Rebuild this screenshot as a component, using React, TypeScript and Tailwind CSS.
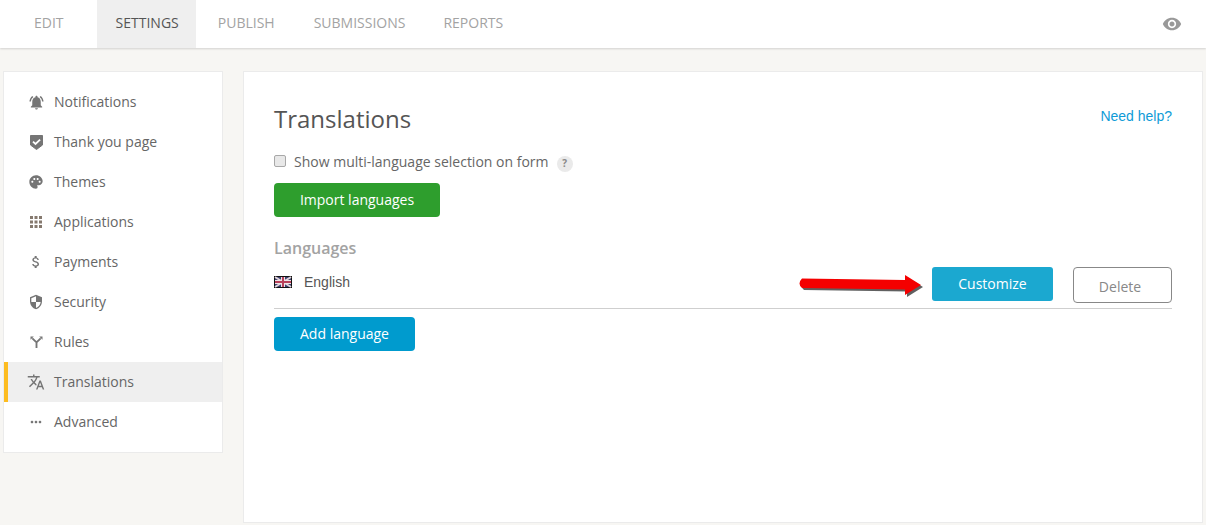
import React from "react";
import {
  MdNotificationsActive,
  MdPalette,
  MdApps,
  MdAttachMoney,
  MdSecurity,
  MdTranslate,
  MdMoreHoriz,
  MdVisibility,
} from "react-icons/md";

const ShieldCheck = () => (
  <svg width="13" height="15" viewBox="0 0 13 15">
    <path d="M0.5 0.5h12v9.5l-6 4.5-6-4.5z" fill="#757575" stroke="#757575" strokeLinejoin="round" />
    <path d="M3 6.6l2.5 2.4 4.6-4.4" fill="none" stroke="#fff" strokeWidth="1.8" />
  </svg>
);

const RulesIcon = () => (
  <svg width="13" height="12" viewBox="0 0 14 13">
    <path d="M7 13V7M7 7L2.5 2.5M7 7l4.5-4.5" fill="none" stroke="#757575" strokeWidth="2" />
    <path d="M0.5 0.5h3.6L0.5 4.1zM13.5 0.5H9.9l3.6 3.6z" fill="#757575" />
  </svg>
);

const Flag = () => (
  <svg width="18" height="12" viewBox="0 0 18 12">
    <rect width="18" height="12" fill="#111" />
    <rect x="1" y="1" width="16" height="10" fill="#3a3f6e" />
    <path d="M1 1l16 10M17 1L1 11" stroke="#e3d5da" strokeWidth="2" />
    <path d="M9 1v10M1 6h16" stroke="#eee4e6" strokeWidth="4" />
    <path d="M9 1v10M1 6h16" stroke="#b8405a" strokeWidth="2" />
  </svg>
);

const RedArrow = () => (
  <svg width="128" height="26" viewBox="0 0 128 26" className="block">
    <path
      d="M4 4.5L107 6L107 1L123 11L107 21L107 15.5L4 14Q-1 9.5 4 4.5z"
      fill="#1c1c1c"
      opacity="0.7"
      transform="translate(2 2)"
    />
    <path d="M4 4.5L107 6L107 1L123 11L107 21L107 15.5L4 14Q-1 9.5 4 4.5z" fill="#f40000" />
  </svg>
);

const tabs = [
  { label: "EDIT", cls: "ml-4 mr-[15px] px-[18px] text-[#a3a3a3]" },
  { label: "SETTINGS", cls: "mr-1 pl-[19px] pr-[17px] bg-[#efefef] text-[#555] border-[#fdbc1f]" },
  { label: "PUBLISH", cls: "mr-[3px] px-[18px] text-[#a3a3a3]" },
  { label: "SUBMISSIONS", cls: "mr-[2px] px-[18px] text-[#a3a3a3]" },
  { label: "REPORTS", cls: "px-[18px] text-[#a3a3a3]" },
];

const menu = [
  { label: "Notifications", icon: <MdNotificationsActive size={17} /> },
  { label: "Thank you page", icon: <ShieldCheck /> },
  { label: "Themes", icon: <MdPalette size={16} /> },
  { label: "Applications", icon: <MdApps size={18} className="text-[#85796e]" /> },
  { label: "Payments", icon: <MdAttachMoney size={16} /> },
  { label: "Security", icon: <MdSecurity size={16} /> },
  { label: "Rules", icon: <RulesIcon /> },
  { label: "Translations", icon: <MdTranslate size={18} />, active: true },
  { label: "Advanced", icon: <MdMoreHoriz size={16} /> },
];

export default function App() {
  return (
    <div className="h-[525px] w-[1206px] overflow-hidden bg-[#f7f6f3] font-['Open_Sans',sans-serif]">
      <div className="flex h-12 items-stretch bg-white pr-[24px] shadow-[0_1px_2px_rgba(0,0,0,0.15)]">
        {tabs.map((tab) => (
          <div
            key={tab.label}
            className={`flex items-center border-b-4 border-transparent pt-[2px] text-sm ${tab.cls}`}
          >
            {tab.label}
          </div>
        ))}
        <div className="ml-auto flex items-center text-[#999]">
          <MdVisibility size={20} />
        </div>
      </div>

      <div className="flex items-start gap-5 pl-[3px] pt-[23px]">
        <div className="h-[382px] w-[220px] border border-[#ebebeb] bg-white py-[10px]">
          {menu.map((item) => (
            <div
              key={item.label}
              className={`flex h-10 items-center border-l-4 text-sm text-[#666] ${
                item.active ? "border-[#fdbc1f] bg-[#efefef]" : "border-transparent"
              }`}
            >
              <span className="flex w-[46px] shrink-0 items-center justify-center pl-[10px] text-[#757575]">
                {item.icon}
              </span>
              <span>{item.label}</span>
            </div>
          ))}
        </div>

        <div className="h-[452px] w-[960px] border border-[#ebebeb] bg-white px-[30px] pt-[29px]">
          <div className="flex items-start justify-between">
            <h1 className="text-2xl leading-9 text-[#555]">Translations</h1>
            <a className="mt-[5px] font-['Liberation_Sans',sans-serif] text-sm text-[#0f9bd7]">Need help?</a>
          </div>
          <div className="mt-[15px] flex h-[20px] items-center">
            <span className="mb-[2px] h-3 w-3 rounded-[2px] border border-[#a8a8a8] bg-[#e8e8e8]" />
            <span className="ml-2 text-sm text-[#666]">Show multi-language selection on form</span>
            <span className="ml-2 mt-[3px] flex h-4 w-4 items-center justify-center rounded-full bg-[#eaeaea] text-[10px] font-bold text-[#888]">
              ?
            </span>
          </div>
          <button className="mt-[11px] block h-[34px] w-[166px] rounded-[4px] bg-[#2e9e2d] text-sm text-white">
            Import languages
          </button>
          <h2 className="mt-[20px] text-base font-semibold leading-[22px] text-[#a3a3a3]">Languages</h2>
          <div className="mt-[8px] flex h-[42px] items-start border-b border-[#cfcfcf]">
            <span className="mt-[5px] flex items-center">
              <Flag />
              <span className="ml-3 font-['Liberation_Sans',sans-serif] text-sm text-[#555]">English</span>
            </span>
            <span className="ml-auto mr-[6px] mt-[7px]">
              <RedArrow />
            </span>
            <button className="h-[34px] w-[121px] rounded-[3px] bg-[#1ba8d0] text-sm text-white">Customize</button>
            <button className="ml-5 h-[36px] w-[99px] rounded-[4px] border border-[#888] bg-white pr-[5px] pt-[4px] text-sm text-[#888]">
              Delete
            </button>
          </div>
          <button className="mt-2 block h-[34px] w-[141px] rounded-[4px] bg-[#009bce] text-sm text-white">
            Add language
          </button>
        </div>
      </div>
    </div>
  );
}
